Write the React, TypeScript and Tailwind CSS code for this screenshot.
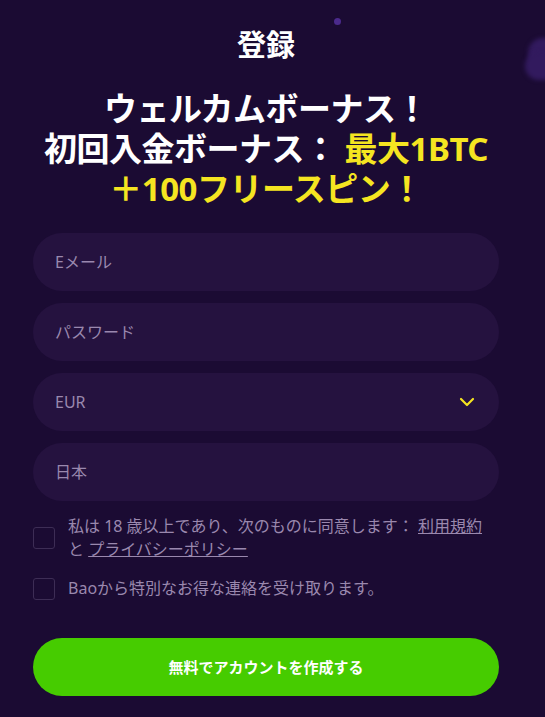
import React from "react";

export default function App() {
  const font = { fontFamily: '"Noto Sans", "Noto Sans CJK JP", sans-serif' };
  return (
    <div className="relative w-[545px] h-[717px] overflow-hidden bg-[#1b0b33]" style={font}>
      <div className="absolute left-[334px] top-[18px] w-[7px] h-[7px] rounded-full bg-[#4b2a8c] blur-[0.5px]" />
      <div className="absolute left-[528px] top-[38px] w-[34px] h-[30px] rounded-full bg-[#321a5e] blur-[2px]" />
      <div className="absolute left-[525px] top-[52px] w-[34px] h-[28px] rounded-full bg-[#321a5e] blur-[2px]" />
      <div className="pl-[33px] pr-[46px]">
        <div className="flex flex-col items-center pt-[27px]">
          <h1 className="text-[29px] leading-[36px] font-bold text-white">登録</h1>
          <div className="mt-[26px] text-center text-[33px] leading-[40px] font-bold text-white tracking-[-0.5px] whitespace-nowrap">
            <div>ウェルカムボーナス！</div>
            <div>
              初回入金ボーナス： <span className="text-[#f5e521]">最大1BTC</span>
            </div>
            <div className="text-[#f5e521]">＋100フリースピン！</div>
          </div>
        </div>
        <div className="mt-[24px] flex flex-col gap-[12px]">
          {["Eメール", "パスワード", "EUR", "日本"].map((p, i) => (
            <div key={i} className="h-[58px] rounded-full bg-[#25123f] flex items-center justify-between pl-[22px] pr-[24px]">
              <span className="text-[16px] text-[#9a88ae]">{p}</span>
              {p === "EUR" && (
                <svg width="16" height="10" viewBox="0 0 16 10" fill="none">
                  <path d="M2 2 L8 8 L14 2" stroke="#f5e521" strokeWidth="2.2" strokeLinecap="round" strokeLinejoin="round" />
                </svg>
              )}
            </div>
          ))}
        </div>
        <div className="mt-[14px] flex flex-col gap-[16px]">
          <div className="flex items-start gap-[13px]">
            <div className="mt-[12px] w-[22px] h-[22px] shrink-0 rounded-[3px] border border-[#3d2d55]" />
            <div className="text-[16px] leading-[23px] text-[#9a88ae] whitespace-nowrap">
              私は 18 歳以上であり、次のものに同意します： <span className="underline">利用規約</span>
              <br />と <span className="underline">プライバシーポリシー</span>
            </div>
          </div>
          <div className="flex items-center gap-[13px]">
            <div className="w-[22px] h-[22px] shrink-0 rounded-[3px] border border-[#3d2d55]" />
            <div className="text-[16px] leading-[23px] text-[#9a88ae]">Baoから特別なお得な連絡を受け取ります。</div>
          </div>
        </div>
        <div className="mt-[38px]">
          <button className="w-full h-[58px] rounded-full bg-[#46cc00] text-white text-[15px] font-bold">
            無料でアカウントを作成する
          </button>
        </div>
      </div>
    </div>
  );
}
